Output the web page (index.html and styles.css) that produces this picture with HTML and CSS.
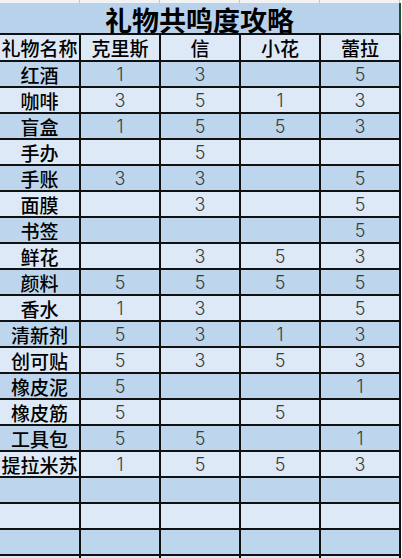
FILE: index.html
```html
<!DOCTYPE html>
<html lang="zh">
<head>
<meta charset="utf-8">
<title>礼物共鸣度攻略</title>
<link rel="stylesheet" href="styles.css">
</head>
<body>
<div class="sheet">
  <div class="strip"><span></span><span></span><span></span><span></span><span></span></div>
  <div class="title"><span class="title-text">礼物共鸣度攻略</span></div>
  <div class="row light head"><div class="c lab">礼物名称</div><div class="c lab">克里斯</div><div class="c lab">信</div><div class="c lab">小花</div><div class="c lab">蕾拉</div></div>
  <div class="row dark"><div class="c lab">红酒</div><div class="c num">1</div><div class="c num">3</div><div class="c num"></div><div class="c num">5</div></div>
  <div class="row light"><div class="c lab">咖啡</div><div class="c num">3</div><div class="c num">5</div><div class="c num">1</div><div class="c num">3</div></div>
  <div class="row dark"><div class="c lab">盲盒</div><div class="c num">1</div><div class="c num">5</div><div class="c num">5</div><div class="c num">3</div></div>
  <div class="row light"><div class="c lab">手办</div><div class="c num"></div><div class="c num">5</div><div class="c num"></div><div class="c num"></div></div>
  <div class="row dark"><div class="c lab">手账</div><div class="c num">3</div><div class="c num">3</div><div class="c num"></div><div class="c num">5</div></div>
  <div class="row light"><div class="c lab">面膜</div><div class="c num"></div><div class="c num">3</div><div class="c num"></div><div class="c num">5</div></div>
  <div class="row dark"><div class="c lab">书签</div><div class="c num"></div><div class="c num"></div><div class="c num"></div><div class="c num">5</div></div>
  <div class="row light"><div class="c lab">鲜花</div><div class="c num"></div><div class="c num">3</div><div class="c num">5</div><div class="c num">3</div></div>
  <div class="row dark"><div class="c lab">颜料</div><div class="c num">5</div><div class="c num">5</div><div class="c num">5</div><div class="c num">5</div></div>
  <div class="row light"><div class="c lab">香水</div><div class="c num">1</div><div class="c num">3</div><div class="c num"></div><div class="c num">5</div></div>
  <div class="row dark"><div class="c lab">清新剂</div><div class="c num">5</div><div class="c num">3</div><div class="c num">1</div><div class="c num">3</div></div>
  <div class="row light"><div class="c lab">创可贴</div><div class="c num">5</div><div class="c num">3</div><div class="c num">5</div><div class="c num">3</div></div>
  <div class="row dark"><div class="c lab">橡皮泥</div><div class="c num">5</div><div class="c num"></div><div class="c num"></div><div class="c num">1</div></div>
  <div class="row light"><div class="c lab">橡皮筋</div><div class="c num">5</div><div class="c num"></div><div class="c num">5</div><div class="c num"></div></div>
  <div class="row dark"><div class="c lab">工具包</div><div class="c num">5</div><div class="c num">5</div><div class="c num"></div><div class="c num">1</div></div>
  <div class="row light"><div class="c lab">提拉米苏</div><div class="c num">1</div><div class="c num">5</div><div class="c num">5</div><div class="c num">3</div></div>
  <div class="row dark"><div class="c"></div><div class="c"></div><div class="c"></div><div class="c"></div><div class="c"></div></div>
  <div class="row light"><div class="c"></div><div class="c"></div><div class="c"></div><div class="c"></div><div class="c"></div></div>
  <div class="row dark"><div class="c"></div><div class="c"></div><div class="c"></div><div class="c"></div><div class="c"></div></div>
  <div class="row light"><div class="c"></div><div class="c"></div><div class="c"></div><div class="c"></div><div class="c"></div></div>
</div>
</body>
</html>
```
FILE: styles.css
```css
html, body {
  margin: 0;
  padding: 0;
  background: #ffffff;
  overflow: hidden;
  height: 558px;
}

.sheet {
  width: 401px;
  font-family: "Noto Sans CJK SC", "Noto Sans", sans-serif;
}

.strip {
  display: grid;
  grid-template-columns: 81px 80px 80px 80px 80px;
  height: 3px;
  background: #f3f3f3;
}

.strip span {
  border-right: 1px solid #c6c6c6;
  box-sizing: border-box;
  margin-right: 1px;
}

.title {
  height: 32px;
  box-sizing: border-box;
  background: #b9d2ec;
  border-bottom: 2px solid #111;
  border-right: 2px solid #1f4f35;
  display: flex;
  justify-content: center;
  align-items: center;
  padding-top: 4px;
  color: #000;
}

.title-text {
  font-size: 27px;
  font-weight: 700;
  line-height: 26px;
}

.row {
  display: grid;
  grid-template-columns: 81px 80px 80px 80px 80px;
  height: 26px;
  box-sizing: border-box;
  border-bottom: 2px solid #111;
}

.row.head {
  height: 27px;
}

.dark {
  background: #bdd6ee;
}

.light {
  background: #dde9f6;
}

.c {
  border-right: 2px solid #111;
  box-sizing: border-box;
  text-align: center;
  white-space: nowrap;
}

.lab {
  font-size: 19px;
  line-height: 25px;
  font-weight: 500;
  color: #000;
}

.num {
  font-family: Inter, "Noto Sans", sans-serif;
  font-weight: 300;
  font-size: 18px;
  line-height: 25px;
  color: #3a3a3a;
}
```
